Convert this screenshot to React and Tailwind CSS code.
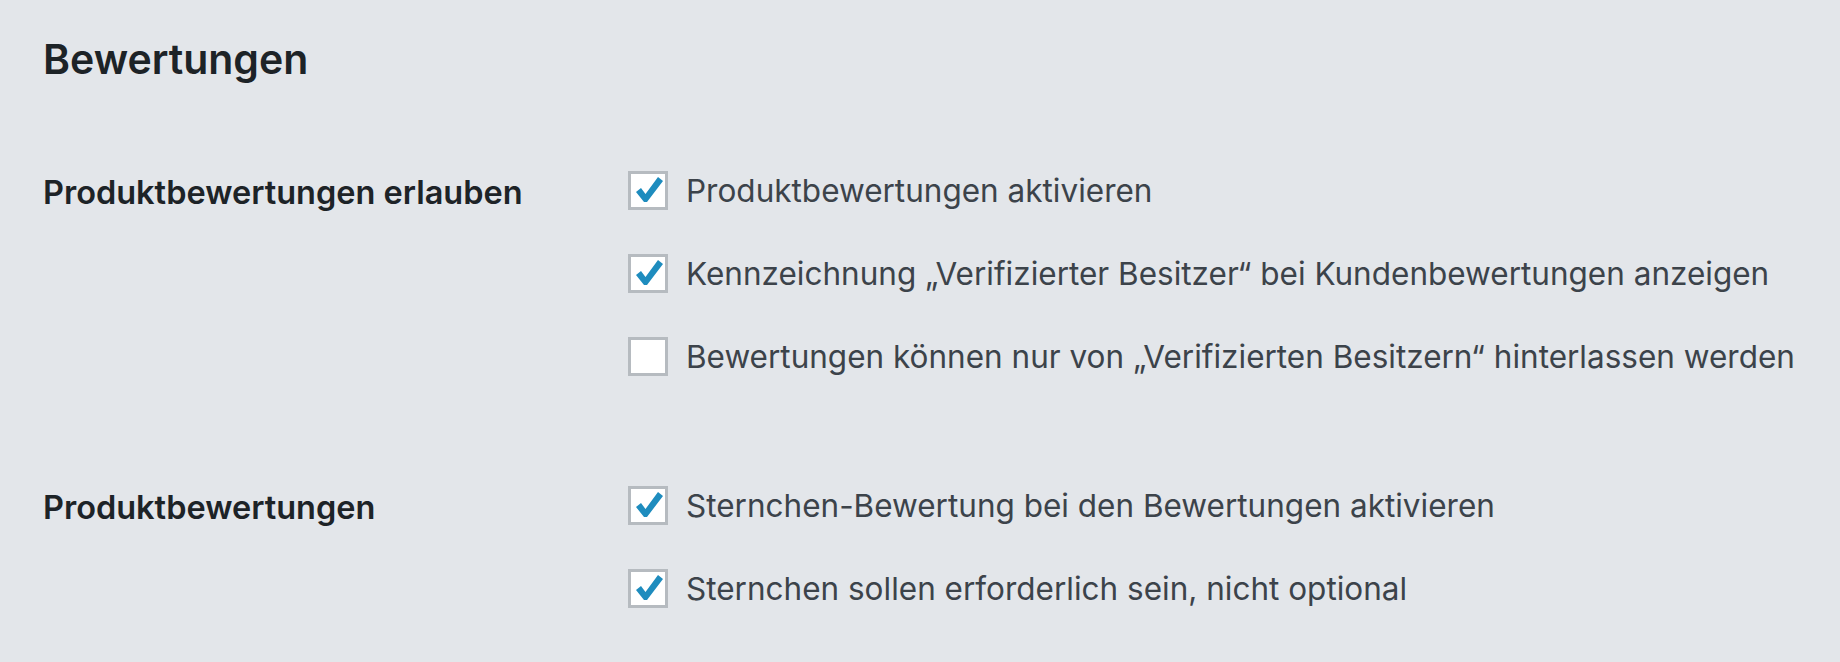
import { useState } from 'react';

const sections = [
  {
    label: 'Produktbewertungen erlauben',
    options: [
      { id: 'enable', text: 'Produktbewertungen aktivieren', checked: true },
      { id: 'verified_label', text: 'Kennzeichnung „Verifizierter Besitzer“ bei Kundenbewertungen anzeigen', checked: true },
      { id: 'verified_only', text: 'Bewertungen können nur von „Verifizierten Besitzern“ hinterlassen werden', checked: false },
    ],
  },
  {
    label: 'Produktbewertungen',
    options: [
      { id: 'stars', text: 'Sternchen-Bewertung bei den Bewertungen aktivieren', checked: true },
      { id: 'stars_required', text: 'Sternchen sollen erforderlich sein, nicht optional', checked: true },
    ],
  },
];

function Checkbox({ checked, onChange }) {
  return (
    <button
      type="button"
      onClick={onChange}
      className="w-[40px] h-[39px] shrink-0 bg-white border-[3px] border-[#b6bbc0] flex items-center justify-center"
    >
      {checked && (
        <svg viewBox="0 0 34 33" className="w-[34px] h-[33px]">
          <polygon points="5,18 10,14 14.5,20 27,3 32,7 16,28 13,28" fill="#1e8cbe" />
        </svg>
      )}
    </button>
  );
}

export default function App() {
  const [values, setValues] = useState(() => {
    const v = {};
    sections.forEach((s) => s.options.forEach((o) => (v[o.id] = o.checked)));
    return v;
  });

  const toggle = (id) => setValues((prev) => ({ ...prev, [id]: !prev[id] }));

  return (
    <div
      className="min-h-screen bg-[#e3e6ea] pl-[43px] pt-[34px]"
      style={{ fontFamily: 'Inter, "Noto Sans", sans-serif' }}
    >
      <h2 className="text-[41px] leading-[50px] font-semibold text-[#1d2327]">Bewertungen</h2>

      <div className="mt-[87px] flex flex-col gap-[110px]">
        {sections.map((section) => (
          <div key={section.label} className="flex">
            {/* Label */}
            <div className="w-[585px] shrink-0 h-[39px] pt-[6px] flex items-center text-[32.5px] font-semibold text-[#1d2327] whitespace-nowrap">
              {section.label}
            </div>

            {/* Options */}
            <div className="flex flex-col gap-[44px]">
              {section.options.map((opt) => (
                <label key={opt.id} className="flex items-center gap-[18px] cursor-pointer">
                  <Checkbox checked={values[opt.id]} onChange={() => toggle(opt.id)} />
                  <span className="text-[31.5px] leading-[39px] text-[#3c434a] whitespace-nowrap">
                    {opt.text}
                  </span>
                </label>
              ))}
            </div>
          </div>
        ))}
      </div>
    </div>
  );
}
